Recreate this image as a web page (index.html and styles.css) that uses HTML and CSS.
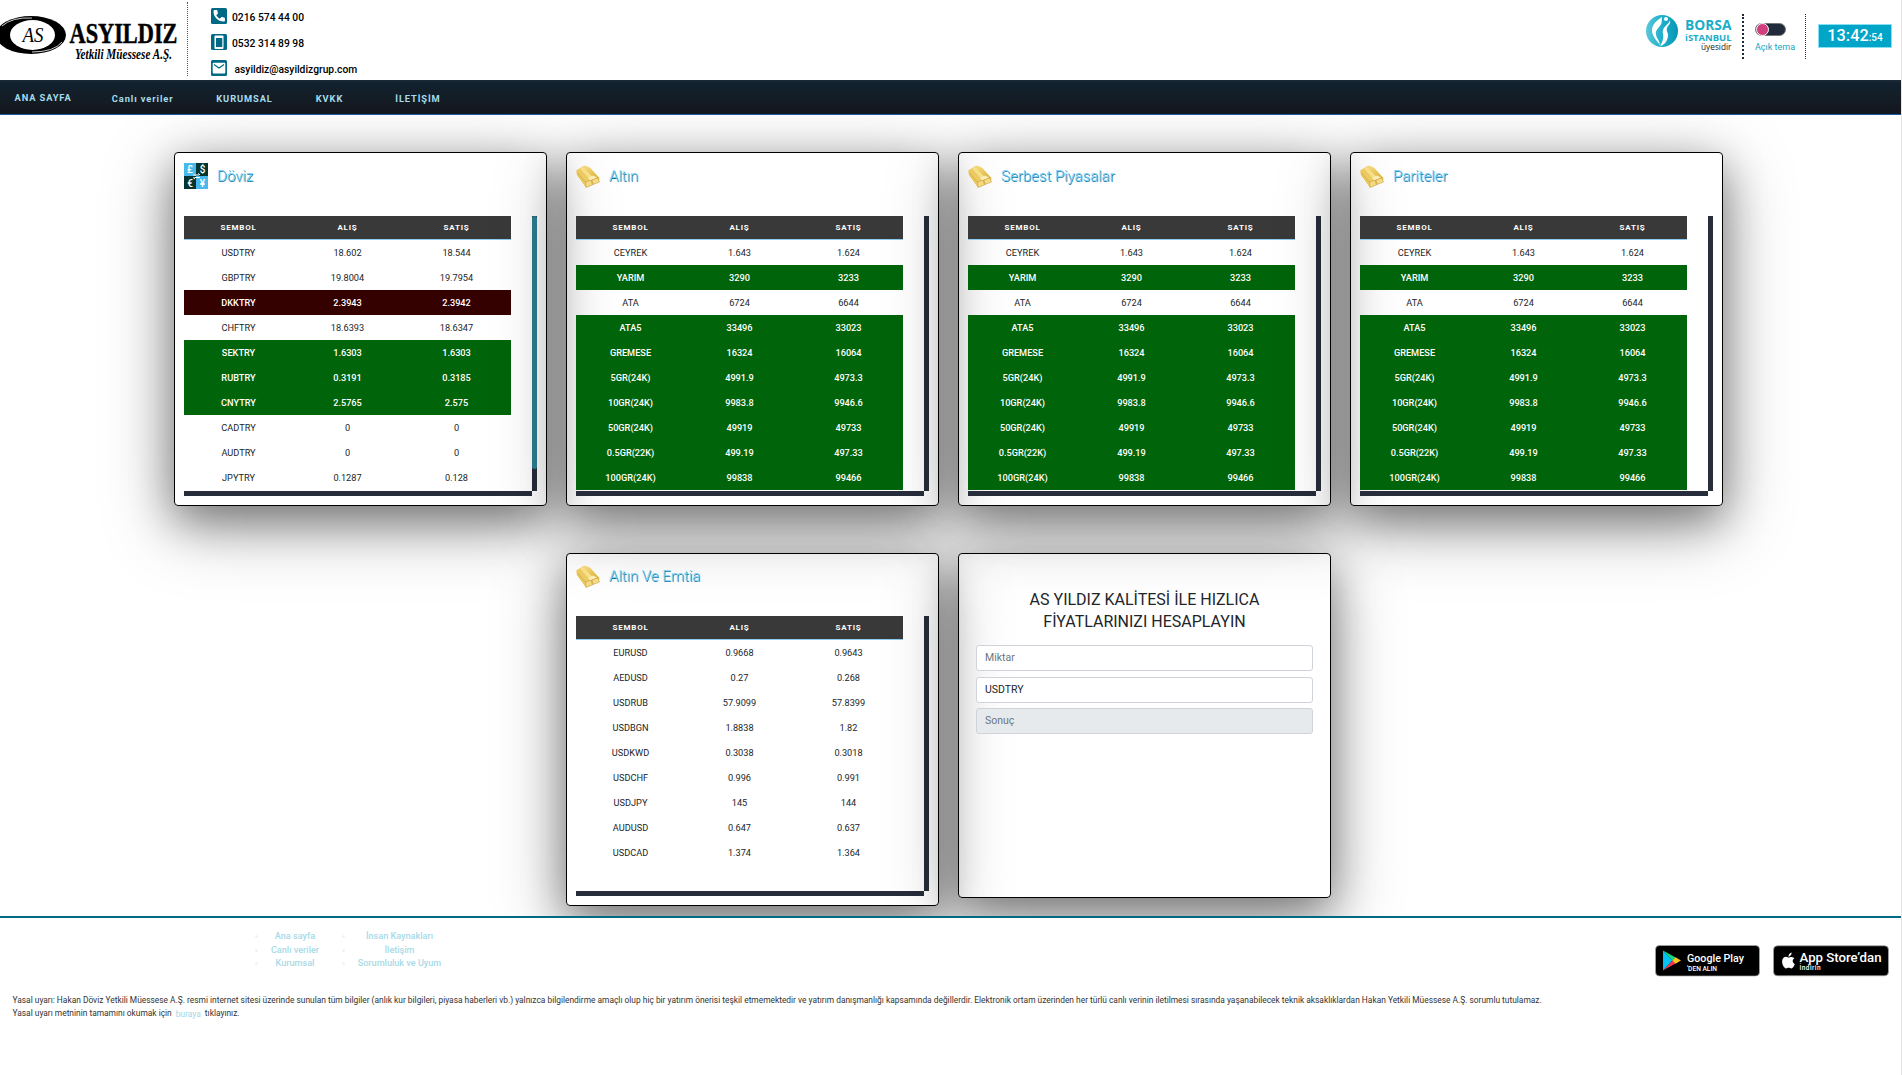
FILE: index.html
```html
<!DOCTYPE html>
<html lang="tr">
<head>
<meta charset="utf-8">
<title>As Yıldız Yetkili Müessese</title>
<link rel="stylesheet" href="styles.css">
</head>
<body>
<svg width="0" height="0" class="defs">
  <defs>
    <linearGradient id="goldBar" x1="0" y1="0" x2="1" y2="1"><stop offset="0" stop-color="#f7de7e"/><stop offset="1" stop-color="#dfb443"/></linearGradient>
    <symbol id="gold" viewBox="0 0 24 24">
      <path d="M.5 5.500 8 .8 14 3 23.500 13 22.500 17 10 22.500 1 10z" fill="#e0b94a"/>
      <path d="M.5 5.500 4 3.500 13 14 10 22 1 10z" fill="#ecca62"/>
      <path d="M4 3.500 7 1.500 17 12 13 14z" fill="#f6df88"/>
      <path d="M7 1.500 10 .8 14 3 21 11 17 12z" fill="url(#goldBar)"/>
      <path d="M1.500 8 10 18" stroke="#d3a63c" stroke-width=".8"/>
      <path d="M12 13 17 10.500 21 12.500 14 15.500z" fill="#faeeb8"/>
      <path d="M9.500 17 15 15 16.500 19.800 10 22.500z" fill="#f4d980" stroke="#c59634" stroke-width=".5"/>
      <path d="M16 15 22 13 23.500 17 17 19.500z" fill="#f6dc8a" stroke="#c59634" stroke-width=".5"/>
    </symbol>
  </defs>
</svg>

<header class="top">
  <svg class="logo" width="187" height="80" viewBox="0 0 187 80">
    <ellipse cx="31" cy="35" rx="35" ry="19" fill="#000"/>
    <ellipse cx="32.500" cy="35" rx="22.500" ry="15" fill="#fff"/>
    <path d="M2 26Q12 17 32 18" fill="none" stroke="#fff" stroke-width=".8"/>
    <path d="M62 42Q54 52 32 52" fill="none" stroke="#fff" stroke-width=".8"/>
    <text x="22.500" y="42" font-size="20" font-style="italic" textLength="21" lengthAdjust="spacingAndGlyphs">AS</text>
    <text x="69.500" y="43" font-size="30" font-weight="700" stroke="#000" stroke-width=".5" textLength="108" lengthAdjust="spacingAndGlyphs">ASYILDIZ</text>
    <text x="75" y="58.500" font-size="15" font-style="italic" font-weight="700" textLength="97" lengthAdjust="spacingAndGlyphs">Yetkili Müessese A.Ş.</text>
  </svg>
  <ul class="contact">
    <li><svg width="16" height="16" viewBox="0 0 16 16"><rect width="16" height="16" rx="1.500" fill="#006a86"/><path d="M2.500 3.500C2.500 2.500 3 2 4 2h1.500c.6 0 .8.300 1 1l.4 1.800c.1.500 0 .8-.4 1.200L5.300 7.200C6.200 8.800 7.200 9.800 8.800 10.700L10 9.500c.4-.4.800-.5 1.200-.4l1.800.4c.7.200 1 .5 1 1V12c0 1-.5 1.500-1.500 1.500C7 13.500 2.500 9 2.500 3.500z" fill="#fff"/></svg><span>0216 574 44 00</span></li>
    <li><svg width="16" height="16" viewBox="0 0 16 16"><rect width="16" height="16" rx="1.500" fill="#006a86"/><rect x="3.500" y="1.500" width="9" height="13.500" rx="1" fill="#fff"/><rect x="5" y="4" width="6.300" height="9" fill="#006a86"/></svg><span>0532 314 89 98</span></li>
    <li><svg width="16" height="16" viewBox="0 0 16 16"><rect width="16" height="16" rx="1.500" fill="#006a86"/><rect x="1.700" y="2.700" width="12.600" height="10.800" rx="1" fill="#fff"/><path d="M3 4.500 8 8l5-3.500" fill="none" stroke="#006a86" stroke-width="1.200"/></svg><span class="mail">asyildiz@asyildizgrup.com</span></li>
  </ul>
  <div class="tools">
    <svg class="borsa" width="88" height="42" viewBox="0 0 88 42">
      <defs><linearGradient id="globe"><stop offset="0" stop-color="#5cc6da"/><stop offset=".5" stop-color="#1fb0cb"/><stop offset="1" stop-color="#0795b4"/></linearGradient></defs>
      <circle cx="16" cy="17" r="16" fill="url(#globe)"/>
      <path d="M16 3C11 6 5 11 6 18c1 5 5 9 8 13-1-6-5-8-4-13 1-4 5-6 5.500-9C16 7 15.500 5 16 3z" fill="#fff"/>
      <path d="M24 6c-1 4-6 6-7 10-1 3 1 5 0 9-.5 3-2 5-3 7 5-1 8-6 8-11 0-3-2-4-1-7 1-3 4-4 3-8z" fill="#fff"/>
      <circle cx="20" cy="5" r="2" fill="#fff"/>
      <text x="39" y="16" font-size="14" font-weight="700" fill="#1badc8" textLength="46.500" lengthAdjust="spacingAndGlyphs">BORSA</text>
      <text x="39" y="27" font-size="9.500" font-weight="700" fill="#1badc8" textLength="46.500" lengthAdjust="spacingAndGlyphs">iSTANBUL</text>
      <text x="55" y="36" font-size="8.500" fill="#222" textLength="30.500" lengthAdjust="spacingAndGlyphs">üyesidir</text>
    </svg>
    <i class="sep wide"></i>
    <div class="theme"><span class="switch"><b></b></span><span class="label">Açık tema</span></div>
    <i class="sep"></i>
    <div class="clock">13:42<small>:54</small></div>
  </div>
</header>

<nav class="menu">
  <a class="home">ANA SAYFA</a><a class="live">Canlı veriler</a><a class="corp">KURUMSAL</a><a class="kvkk">KVKK</a><a>İLETİŞİM</a>
</nav>

<main>
  <div class="row">
    <section class="card">
      <h2><svg width="24" height="26" viewBox="0 0 24 26"><path d="M0 0h24v26H0z" fill="#48b9ec"/><path d="M12 0h12v13H12zM0 13h12v13H0z" fill="#03342e"/><g font-size="10" font-weight="500" fill="#fff" text-anchor="middle"><text x="6" y="10">£</text><text x="18.500" y="10">$</text><text x="6" y="23.500">€</text><text x="18.500" y="23.500">¥</text></g><path d="M9 12h6M10.500 14.500H16M14 10.500l2 1.500M11 16l-2-1.500" stroke="#fff" fill="none"/></svg><span>Döviz</span></h2>
      <div class="box">
        <table>
          <tr><th>SEMBOL<th>ALIŞ<th>SATIŞ</tr>
          <tr><td>USDTRY<td>18.602<td>18.544</tr>
          <tr><td>GBPTRY<td>19.8004<td>19.7954</tr>
          <tr class="down"><td>DKKTRY<td>2.3943<td>2.3942</tr>
          <tr><td>CHFTRY<td>18.6393<td>18.6347</tr>
          <tr class="up"><td>SEKTRY<td>1.6303<td>1.6303</tr>
          <tr class="up"><td>RUBTRY<td>0.3191<td>0.3185</tr>
          <tr class="up"><td>CNYTRY<td>2.5765<td>2.575</tr>
          <tr><td>CADTRY<td>0<td>0</tr>
          <tr><td>AUDTRY<td>0<td>0</tr>
          <tr><td>JPYTRY<td>0.1287<td>0.128</tr>
        </table>
        <i class="vbar"><b></b></i><i class="hbar"></i>
      </div>
    </section>
    <section class="card">
      <h2><svg width="24" height="24"><use href="#gold"/></svg><span>Altın</span></h2>
      <div class="box">
        <table>
          <tr><th>SEMBOL<th>ALIŞ<th>SATIŞ</tr>
          <tr><td>CEYREK<td>1.643<td>1.624</tr>
          <tr class="up"><td>YARIM<td>3290<td>3233</tr>
          <tr><td>ATA<td>6724<td>6644</tr>
          <tr class="up"><td>ATA5<td>33496<td>33023</tr>
          <tr class="up"><td>GREMESE<td>16324<td>16064</tr>
          <tr class="up"><td>5GR(24K)<td>4991.9<td>4973.3</tr>
          <tr class="up"><td>10GR(24K)<td>9983.8<td>9946.6</tr>
          <tr class="up"><td>50GR(24K)<td>49919<td>49733</tr>
          <tr class="up"><td>0.5GR(22K)<td>499.19<td>497.33</tr>
          <tr class="up"><td>100GR(24K)<td>99838<td>99466</tr>
        </table>
        <i class="vbar"></i><i class="hbar"></i>
      </div>
    </section>
    <section class="card">
      <h2><svg width="24" height="24"><use href="#gold"/></svg><span>Serbest Piyasalar</span></h2>
      <div class="box">
        <table>
          <tr><th>SEMBOL<th>ALIŞ<th>SATIŞ</tr>
          <tr><td>CEYREK<td>1.643<td>1.624</tr>
          <tr class="up"><td>YARIM<td>3290<td>3233</tr>
          <tr><td>ATA<td>6724<td>6644</tr>
          <tr class="up"><td>ATA5<td>33496<td>33023</tr>
          <tr class="up"><td>GREMESE<td>16324<td>16064</tr>
          <tr class="up"><td>5GR(24K)<td>4991.9<td>4973.3</tr>
          <tr class="up"><td>10GR(24K)<td>9983.8<td>9946.6</tr>
          <tr class="up"><td>50GR(24K)<td>49919<td>49733</tr>
          <tr class="up"><td>0.5GR(22K)<td>499.19<td>497.33</tr>
          <tr class="up"><td>100GR(24K)<td>99838<td>99466</tr>
        </table>
        <i class="vbar"></i><i class="hbar"></i>
      </div>
    </section>
    <section class="card">
      <h2><svg width="24" height="24"><use href="#gold"/></svg><span>Pariteler</span></h2>
      <div class="box">
        <table>
          <tr><th>SEMBOL<th>ALIŞ<th>SATIŞ</tr>
          <tr><td>CEYREK<td>1.643<td>1.624</tr>
          <tr class="up"><td>YARIM<td>3290<td>3233</tr>
          <tr><td>ATA<td>6724<td>6644</tr>
          <tr class="up"><td>ATA5<td>33496<td>33023</tr>
          <tr class="up"><td>GREMESE<td>16324<td>16064</tr>
          <tr class="up"><td>5GR(24K)<td>4991.9<td>4973.3</tr>
          <tr class="up"><td>10GR(24K)<td>9983.8<td>9946.6</tr>
          <tr class="up"><td>50GR(24K)<td>49919<td>49733</tr>
          <tr class="up"><td>0.5GR(22K)<td>499.19<td>497.33</tr>
          <tr class="up"><td>100GR(24K)<td>99838<td>99466</tr>
        </table>
        <i class="vbar"></i><i class="hbar"></i>
      </div>
    </section>
  </div>
  <div class="row second">
    <section class="card">
      <h2><svg width="24" height="24"><use href="#gold"/></svg><span>Altın Ve Emtia</span></h2>
      <div class="box">
        <table>
          <tr><th>SEMBOL<th>ALIŞ<th>SATIŞ</tr>
          <tr><td>EURUSD<td>0.9668<td>0.9643</tr>
          <tr><td>AEDUSD<td>0.27<td>0.268</tr>
          <tr><td>USDRUB<td>57.9099<td>57.8399</tr>
          <tr><td>USDBGN<td>1.8838<td>1.82</tr>
          <tr><td>USDKWD<td>0.3038<td>0.3018</tr>
          <tr><td>USDCHF<td>0.996<td>0.991</tr>
          <tr><td>USDJPY<td>145<td>144</tr>
          <tr><td>AUDUSD<td>0.647<td>0.637</tr>
          <tr><td>USDCAD<td>1.374<td>1.364</tr>
        </table>
        <i class="vbar"></i><i class="hbar"></i>
      </div>
    </section>
    <section class="card calc">
      <h3>AS YILDIZ KALİTESİ İLE HIZLICA FİYATLARINIZI HESAPLAYIN</h3>
      <div class="field hint">Miktar</div>
      <div class="field">USDTRY</div>
      <div class="field hint off">Sonuç</div>
    </section>
  </div>
</main>

<footer>
  <div class="foot">
    <ul class="c1"><li><span>Ana sayfa</span></li><li><span>Canlı veriler</span></li><li><span>Kurumsal</span></li></ul>
    <ul class="c2"><li><span>İnsan Kaynakları</span></li><li><span>İletişim</span></li><li><span>Sorumluluk ve Uyum</span></li></ul>
    <svg class="store" width="234" height="32" viewBox="0 0 234 32">
      <rect x=".5" y=".5" width="104" height="30.500" rx="4" fill="#000" stroke="#a6a6a6" stroke-width=".7"/>
      <path d="M8 5.500v20L17.500 15.500z" fill="#00c3f5"/><path d="M8 5.500 20.500 12.500 17.500 15.500z" fill="#14dc7c"/><path d="M8 25.500 20.500 18.500 17.500 15.500z" fill="#f2364b"/><path d="M20.500 12.300 26 15.500 20.500 18.700 17.300 15.500z" fill="#ffc61a"/>
      <text x="32" y="16.500" font-size="11.500" fill="#fff" textLength="57" lengthAdjust="spacingAndGlyphs">Google Play</text>
      <text x="32" y="26" font-size="6.500" fill="#fff" textLength="30" lengthAdjust="spacingAndGlyphs">'DEN ALIN</text>
      <rect x="118.500" y=".8" width="115" height="30" rx="4" fill="#000" stroke="#a6a6a6" stroke-width=".7"/>
      <path d="M133.700 12.600c.8 0 1.800-.8 3-.7 1.200.1 2 .6 2.600 1.400-2.400 1.600-1.900 4.700.5 5.700-.6 1.900-2 4.500-3.500 4.500-1 0-1.400-.7-2.600-.7-1.200 0-1.700.7-2.600.7-1.700 0-4-3.600-4-6.900 0-3 1.900-4.800 3.900-4.800 1.200 0 2 .8 2.700.8zM133.400 11.800c0-1.900 1.500-3.900 3.200-4.200.2 1.900-1.400 4.200-3.200 4.200z" fill="#fff"/>
      <text x="144.500" y="17" font-size="13" fill="#fff" textLength="82" lengthAdjust="spacingAndGlyphs">App Store’dan</text>
      <text x="144.500" y="25" font-size="6.500" fill="#fff" textLength="21">İndirin</text>
    </svg>
  </div>
  <p>Yasal uyarı: Hakan Döviz Yetkili Müessese A.Ş. resmi internet sitesi üzerinde sunulan tüm bilgiler (anlık kur bilgileri, piyasa haberleri vb.) yalnızca bilgilendirme amaçlı olup hiç bir yatırım önerisi teşkil etmemektedir ve yatırım danışmanlığı kapsamında değillerdir. Elektronik ortam üzerinden her türlü canlı verinin iletilmesi sırasında yaşanabilecek teknik aksaklıklardan Hakan Yetkili Müessese A.Ş. sorumlu tutulamaz.<br>Yasal uyarı metninin tamamını okumak için <a>buraya</a> tıklayınız.</p>
</footer>
</body>
</html>
```
FILE: styles.css
```css
* { box-sizing: border-box; }
html { background: #fff; }
body { margin: 0; height: 1075px; overflow: hidden; font-family: Roboto, sans-serif; color: #212529; border-right: 1px solid #e6e6e6; display: flex; flex-direction: column; }
.defs { position: absolute; }
ul { list-style: none; margin: 0; padding: 0; }
i { display: block; }
svg { overflow: visible; }

.top { height: 80px; display: flex; align-items: flex-start; }
.logo { font-family: "Liberation Serif", serif; flex: none; }
.contact { margin-top: 2px; height: 74px; border-left: 1px dotted #00708c; padding: 6px 0 0 23px; display: flex; flex-direction: column; gap: 10px; font-size: 10.300px; font-weight: 500; color: #000; }
.contact li { display: flex; align-items: center; gap: 5px; height: 16px; white-space: nowrap; }
.contact span { padding-top: 3px; }
.contact .mail { padding-left: 2.500px; }
.tools { margin-left: auto; display: flex; padding: 14px 9px 0 0; }
.borsa { font-family: "Open Sans", sans-serif; margin-right: 8px; }
.sep { width: 1px; height: 45px; border-left: 1px dotted #1e2838; }
.sep.wide { width: 2px; border-left-width: 2px; }
.theme { width: 61px; padding: 9px 0 0 11px; display: flex; flex-direction: column; }
.switch { width: 31px; height: 13px; border-radius: 7px; background: #222b3b; border: 1px solid #777; display: flex; align-items: center; }
.switch b { width: 13px; height: 13px; border-radius: 50%; background: #d23f7f; border: 1px solid #fff; flex: none; }
.label { font-size: 9px; line-height: 12px; color: #17a5c2; margin-top: 5px; white-space: nowrap; }
.clock { margin: 10px 0 0 12px; width: 74px; height: 24px; background: #00a5c8; border: 1px solid #87e0f2; color: #fff; font-size: 16.300px; font-weight: 500; line-height: 21px; text-align: center; }
.clock small { font-size: 10px; }

.menu { height: 35px; flex: none; border-bottom: 1px solid #1a5aa6; background: linear-gradient(#1c2b37 0, #12222e 3px, #141a22 75%, #13171f); display: flex; padding: 2px 0 0 14.500px; color: #a5dcec; font-size: 9.300px; font-weight: 700; letter-spacing: .9px; line-height: 34px; }
.menu .home { line-height: 32px; width: 97.300px; }
.menu .live { width: 104.500px; }
.menu .corp { width: 99.500px; }
.menu .kvkk { width: 79.500px; }

main { height: 801px; flex: none; overflow: hidden; padding-top: 37px; }
.row { display: flex; justify-content: center; align-items: flex-start; gap: 19px; padding-right: 4px; }
.second { margin-top: 47px; }
.card { width: 373px; height: 354px; border: 1px solid #000; border-radius: 4px; padding: 0 9px; box-shadow: 0 18px 70px rgba(0, 0, 0, .36), 0 14px 42px rgba(0, 0, 0, .34); }
.second .card { height: 353px; }
.card h2 { margin: 0; height: 63px; padding-top: 10px; display: flex; align-items: flex-start; gap: 9px; font-size: 15px; font-weight: 300; color: #6fcdf6; text-shadow: .8px .8px 0 #1478a6; line-height: 27px; }
.second .card h2 { height: 62px; padding-top: 9px; }
.card h2 use { transform: translateY(2px); }
.card h2 svg { text-shadow: none; }
.box { display: grid; grid-template: 275px 5px / 348px 5px; overflow: hidden; }
table { width: 327px; border-spacing: 0; table-layout: fixed; height: 0; }
th { background: #393939; color: #fff; height: 24px; padding: 0; font-size: 8px; letter-spacing: .8px; border-bottom: 1px solid #8fcbee; }
td { height: 25px; padding: 0 0 1px; text-align: center; font-size: 9.200px; color: #212529; }
.up td, .down td { color: #fff; font-weight: 500; background: #00640a; }
.down td { background: #350000; }
.vbar, .hbar { background: #272d3b; }
.vbar b { display: block; height: 253px; border-radius: 2px; background: #2d7f94; }

.second .calc { height: 345px; padding: 35px 17px 0; }
.calc h3 { margin: 0 auto 12px; width: 260px; font-weight: 400; font-size: 16px; line-height: 22px; text-align: center; }
.field { height: 26px; border: 1px solid #ced4da; border-radius: 3px; background: #fff; padding-left: 8px; font-size: 10.500px; line-height: 23px; margin-bottom: 6px; color: #212529; }
.field + .field + .field { margin-top: -1px; }
.hint { color: #6c757d; }
.off { background: #e7eaed; }

footer { flex: 1; border-top: 2px solid #006a86; background: #fff; position: relative; }
.foot { height: 74px; display: flex; padding: 11px 12px 0 255px; color: #a8dae8; font-size: 9.100px; font-weight: 500; text-align: center; }
.foot ul { width: 66px; margin-top: 1px; }
.foot ul.c2 { width: 101px; margin-left: 21px; }
.foot li { height: 13.500px; line-height: 13.500px; white-space: nowrap; display: flex; }
.foot li::before { content: ""; width: 3px; height: 3px; border-radius: 50%; background: #e8f5fc; margin-top: 5px; }
.foot li span { flex: 1; padding-left: 11px; }
.foot .store { margin: 15.500px 0 0 auto; }
footer p { margin: 0; padding: 2px 0 0 12.500px; font-size: 8.400px; line-height: 13px; color: #333; white-space: nowrap; }
footer a { color: #9dd7e6; margin: 0 2px; position: relative; top: 1px; }
```
